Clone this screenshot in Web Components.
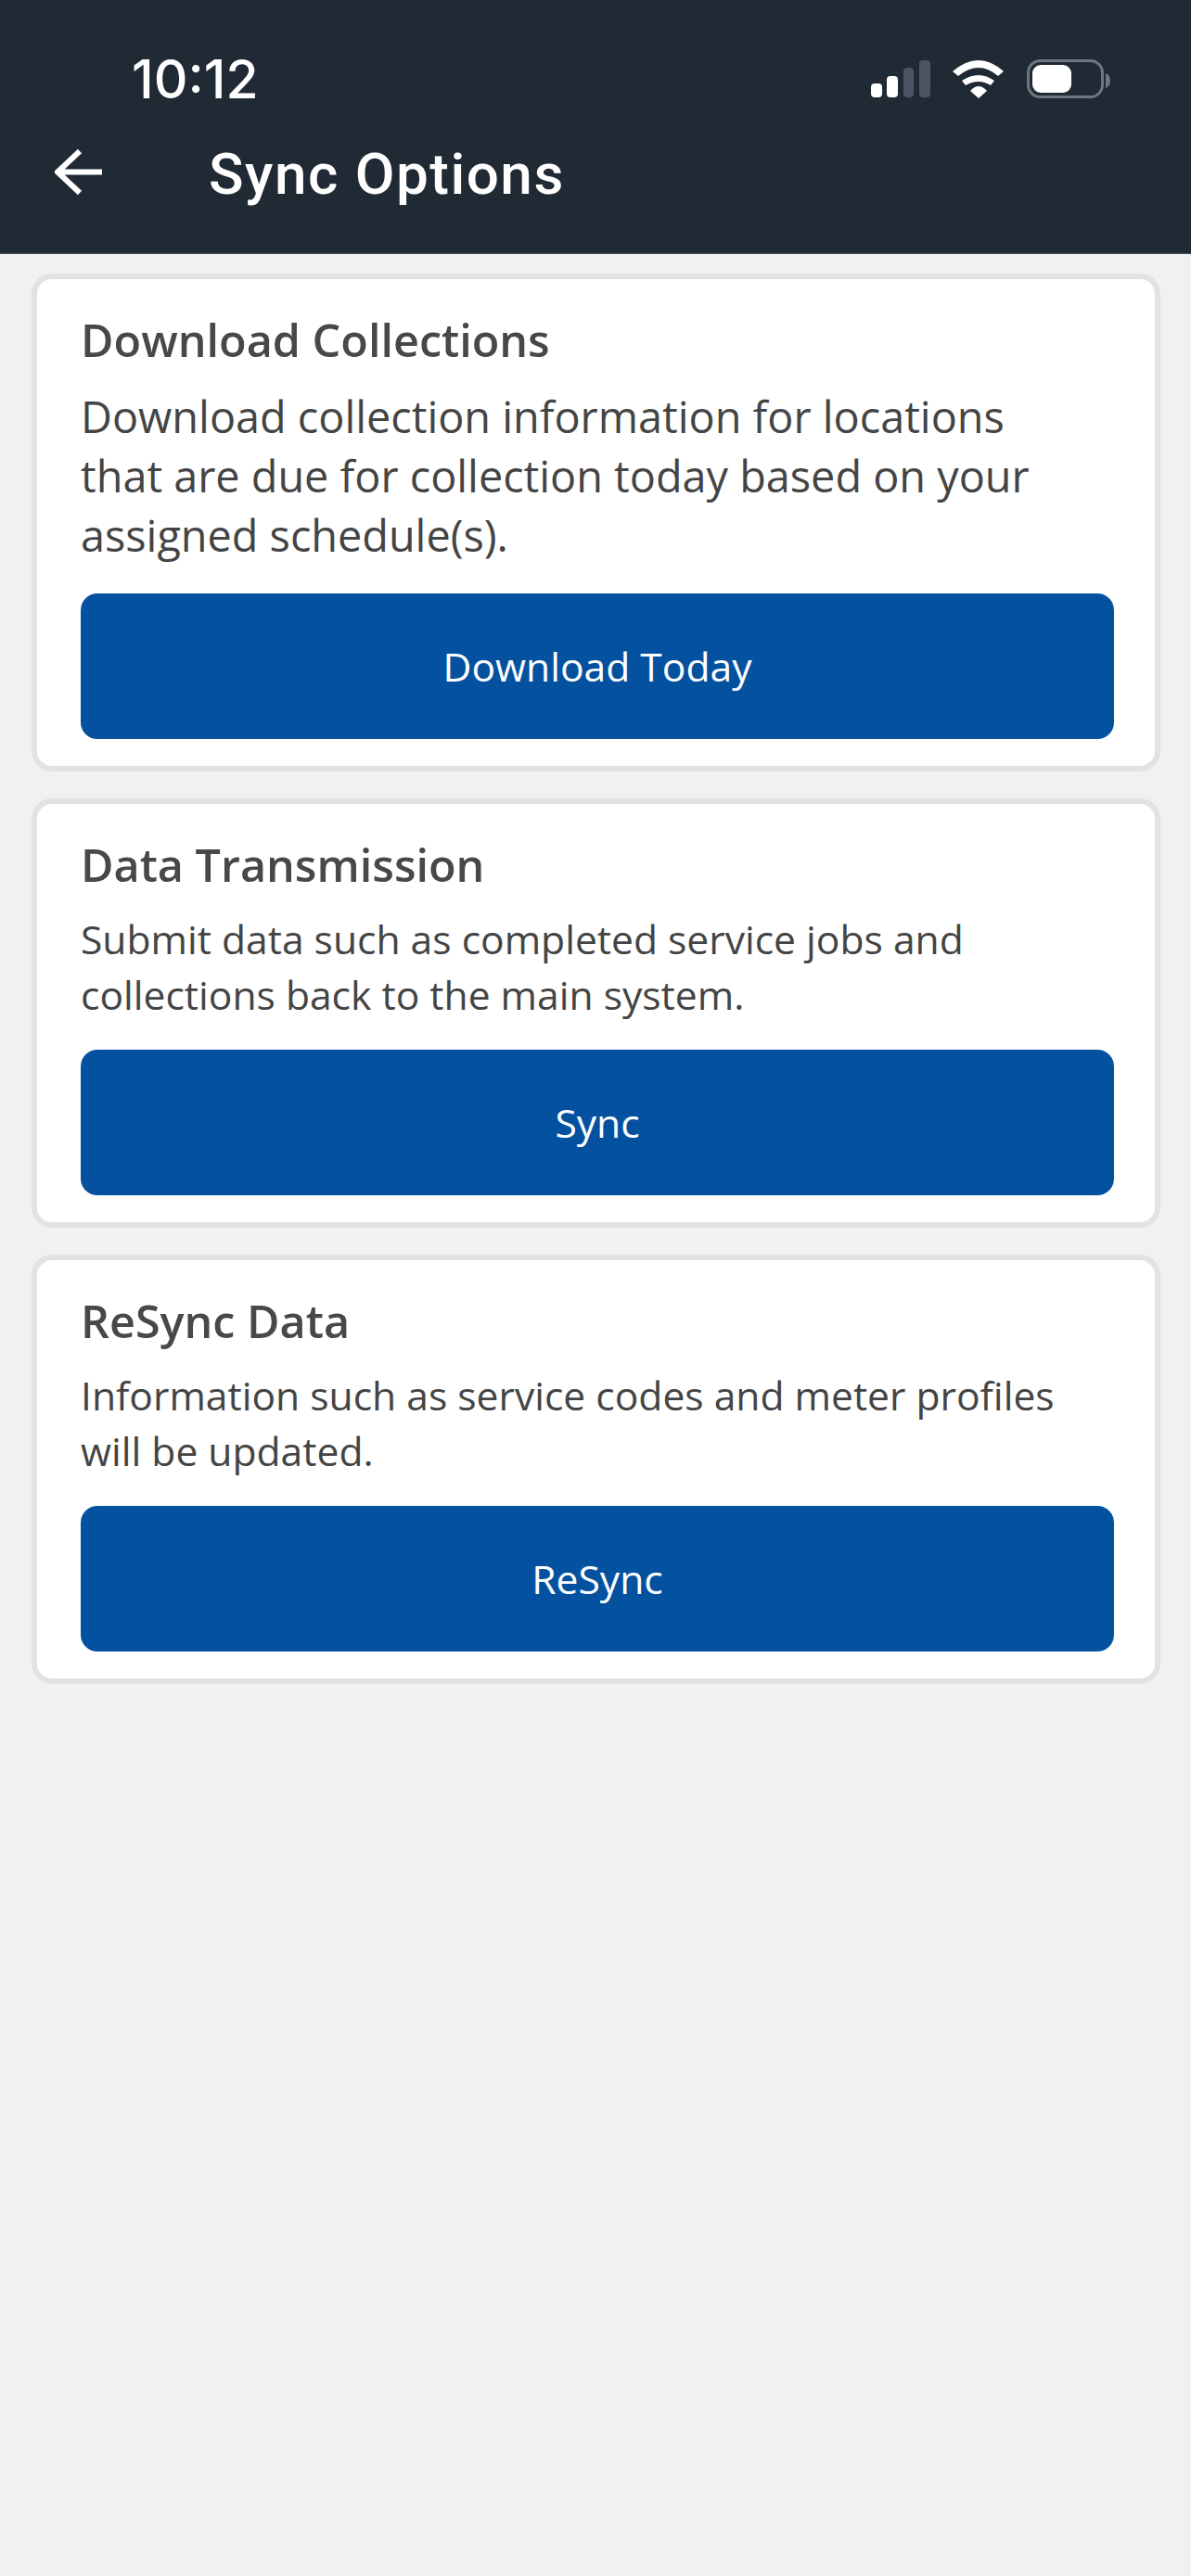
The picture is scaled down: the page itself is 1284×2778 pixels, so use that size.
<!DOCTYPE html>
<html lang="en">
<head>
<meta charset="utf-8">
<title>Sync Options</title>
<style>
  html, body { margin: 0; padding: 0; background: #f1f1f1; }
  body { width: 1284px; height: 2778px; overflow: hidden; font-family: "Open Sans", sans-serif; }
</style>
</head>
<body>
<status-header heading="Sync Options" time="10:12"></status-header>
<card-list>
  <sync-card heading="Download Collections" action="Download Today" style="--body-size: 46.800px; --body-line: 64px; --body-top: 1px; --card-height: 537px; --body-width: 1050px;">
    Download collection information for locations that are due for collection today based on your assigned schedule(s).
  </sync-card>
  <sync-card heading="Data Transmission" action="Sync" style="--body-size: 42.600px; --body-line: 60px; --card-height: 463px;">
    Submit data such as completed service jobs and collections back to the main system.
  </sync-card>
  <sync-card heading="ReSync Data" action="ReSync" style="--body-size: 42.600px; --body-line: 60px; --card-height: 463px;">
    Information such as service codes and meter profiles will be updated.
  </sync-card>
</card-list>
<script>
class StatusHeader extends HTMLElement {
    constructor() {
        super();
        this.root = this.attachShadow({ mode: "open" });
    }

    connectedCallback() {
        this.root.innerHTML = `
          <style>
            :host {
              display: block;
              height: 273px;
              background: #202a35;
              border-bottom: 1px solid #4a5561;
              color: #fff;
            }
            .status {
              display: flex;
              align-items: center;
              justify-content: space-between;
              height: 86px;
              padding: 42px 87px 0 142px;
            }
            .time {
              padding-top: 2px;
              font: 500 57px/60px Inter, sans-serif;
            }
            .status svg { display: block; }
            .bar {
              display: flex;
              align-items: center;
              height: 100px;
              padding: 8px 0 0 59px;
            }
            h1 {
              margin: 0 0 0 115px;
              padding-top: 4px;
              font: 500 62px/70px Roboto, sans-serif;
              letter-spacing: 1.500px;
            }
          </style>
          <div class="status">
            <span class="time">${this.getAttribute("time")}</span>
            <svg width="258" height="46" viewBox="0 0 258 46">
              <rect x="0" y="28" width="12" height="15" rx="4" fill="#fff"/>
              <rect x="17" y="20" width="12" height="23" rx="4" fill="#fff"/>
              <rect x="35" y="11" width="11" height="32" rx="4" fill="#4b5662"/>
              <rect x="52" y="3" width="12" height="40" rx="4" fill="#4b5662"/>
              <path d="M88 15 Q116 -9 143 15 L137 20 Q116 2 94 20 Z" fill="#fff"/>
              <path d="M98 25 Q116 13 133 25 L129 30 Q116 22 102 30 Z" fill="#fff"/>
              <path d="M107 36 Q116 26 125 36 L116 44 Z" fill="#fff"/>
              <rect x="169.500" y="3.500" width="80" height="39" rx="13" fill="none" stroke="#6e7781" stroke-width="3"/>
              <rect x="174" y="8" width="42" height="30" rx="9" fill="#fff"/>
              <path d="M253 17 Q258 19 258 25 Q258 31 253 33 Z" fill="#6e7781"/>
            </svg>
          </div>
          <div class="bar">
            <svg width="51" height="50" viewBox="0 0 51 50">
              <path d="M51 24.500 H4 M27 2 L3 24.500 L27 47" fill="none" stroke="#fff" stroke-width="6"/>
            </svg>
            <h1>${this.getAttribute("heading")}</h1>
          </div>
        `;
    }
}

class CardList extends HTMLElement {
    constructor() {
        super();
        this.root = this.attachShadow({ mode: "open" });
        this.root.innerHTML = `
          <style>
            :host {
              display: flex;
              flex-direction: column;
              gap: 29px;
              padding: 21px 33px 0 34px;
            }
          </style>
          <slot></slot>
        `;
    }
}

class SyncCard extends HTMLElement {
    constructor() {
        super();
        this.root = this.attachShadow({ mode: "open" });
    }

    connectedCallback() {
        this.root.innerHTML = `
          <style>
            :host {
              display: flex;
              flex-direction: column;
              box-sizing: border-box;
              height: var(--card-height);
              padding: 33px 44px 29px 47px;
              background: #fff;
              border: 6px solid #e2e2e2;
              border-radius: 22px;
              color: #444;
              font-family: "Open Sans", sans-serif;
            }
            h2 {
              margin: 0 0 17px;
              color: #484848;
              font-size: 48.500px;
              font-weight: 600;
              line-height: 65px;
            }
            p {
              flex: 1;
              margin: var(--body-top, 0) 0 0;
              max-width: var(--body-width, none);
              font-size: var(--body-size);
              line-height: var(--body-line);
            }
          </style>
          <h2>${this.getAttribute("heading")}</h2>
          <p><slot></slot></p>
          <sync-button>${this.getAttribute("action")}</sync-button>
        `;
    }
}

class SyncButton extends HTMLElement {
    constructor() {
        super();
        this.root = this.attachShadow({ mode: "open" });
        this.root.innerHTML = `
          <style>
            :host {
              display: flex;
              align-items: center;
              justify-content: center;
              box-sizing: border-box;
              height: 157px;
              padding-bottom: 2px;
              background: #04519f;
              border-radius: 18px;
              color: #fff;
              font: 400 42.600px/60px "Open Sans", sans-serif;
            }
          </style>
          <slot></slot>
        `;
    }
}

customElements.define("status-header", StatusHeader);
customElements.define("card-list", CardList);
customElements.define("sync-card", SyncCard);
customElements.define("sync-button", SyncButton);
</script>
</body>
</html>
